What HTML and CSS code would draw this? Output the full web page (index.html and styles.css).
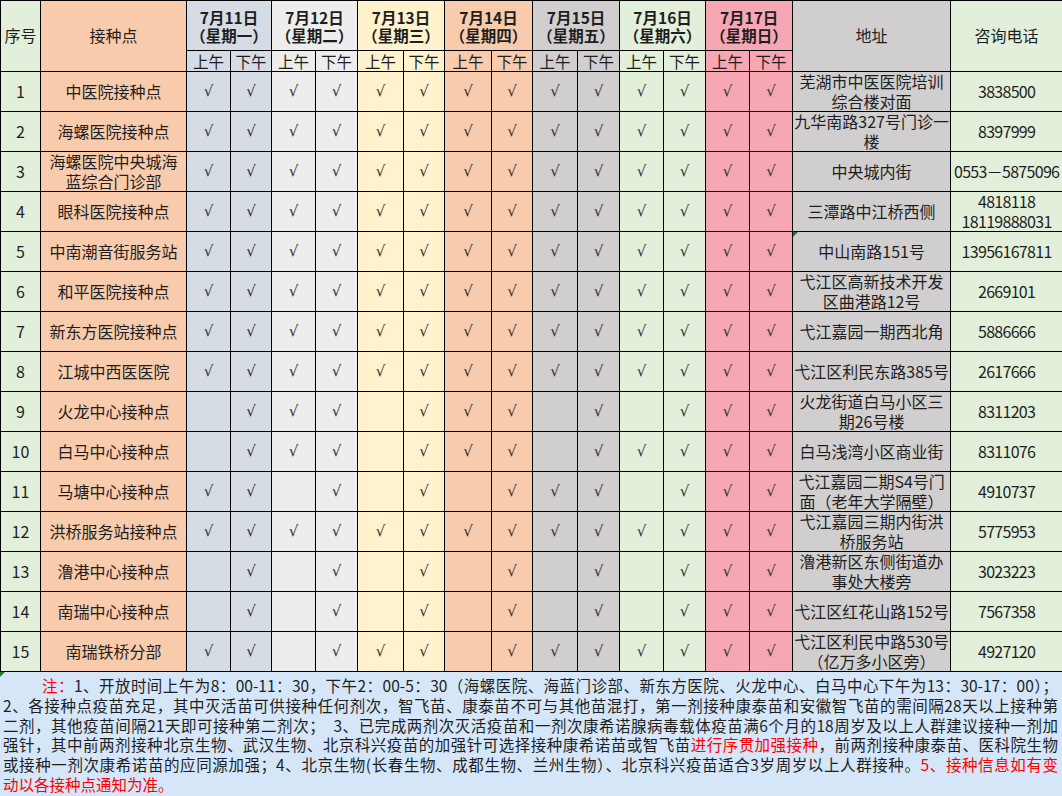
FILE: index.html
```html
<!DOCTYPE html>
<html lang="zh-CN">
<head>
<meta charset="utf-8">
<title>接种点安排</title>
<link rel="stylesheet" href="styles.css">
</head>
<body>
<table class="sheet">
  <colgroup>
    <col class="k-no"><col class="k-site">
    <col class="k11 w44"><col class="k11 w41">
    <col class="k12 w44"><col class="k12 w42">
    <col class="k13 w46"><col class="k13 w41">
    <col class="k14 w47"><col class="k14 w41">
    <col class="k15 w45"><col class="k15 w42">
    <col class="k16 w44"><col class="k16 w42">
    <col class="k17 w44"><col class="k17 w43">
    <col class="k-addr"><col class="k-tel">
  </colgroup>
  <thead>
    <tr class="h1">
      <th rowspan="2">序号</th>
      <th rowspan="2">接种点</th>
      <th colspan="2" class="date">7月11日<br>（星期一）</th>
      <th colspan="2" class="date">7月12日<br>（星期二）</th>
      <th colspan="2" class="date">7月13日<br>（星期三）</th>
      <th colspan="2" class="date">7月14日<br>（星期四）</th>
      <th colspan="2" class="date">7月15日<br>（星期五）</th>
      <th colspan="2" class="date">7月16日<br>（星期六）</th>
      <th colspan="2" class="date">7月17日<br>（星期日）</th>
      <th rowspan="2">地址</th>
      <th rowspan="2">咨询电话</th>
    </tr>
    <tr class="h2">
      <th>上午</th><th>下午</th><th>上午</th><th>下午</th><th>上午</th><th>下午</th><th>上午</th><th>下午</th><th>上午</th><th>下午</th><th>上午</th><th>下午</th><th>上午</th><th>下午</th>
    </tr>
  </thead>
  <tbody>
    <tr><td>1</td><td>中医院接种点</td><td class="ck">√</td><td class="ck">√</td><td class="ck">√</td><td class="ck">√</td><td class="ck">√</td><td class="ck">√</td><td class="ck">√</td><td class="ck">√</td><td class="ck">√</td><td class="ck">√</td><td class="ck">√</td><td class="ck">√</td><td class="ck">√</td><td class="ck">√</td><td>芜湖市中医医院培训<br>综合楼对面</td><td class="tel">3838500</td></tr>
    <tr><td>2</td><td>海螺医院接种点</td><td class="ck">√</td><td class="ck">√</td><td class="ck">√</td><td class="ck">√</td><td class="ck">√</td><td class="ck">√</td><td class="ck">√</td><td class="ck">√</td><td class="ck">√</td><td class="ck">√</td><td class="ck">√</td><td class="ck">√</td><td class="ck">√</td><td class="ck">√</td><td>九华南路327号门诊一<br>楼</td><td class="tel">8397999</td></tr>
    <tr><td>3</td><td>海螺医院中央城海<br>蓝综合门诊部</td><td class="ck">√</td><td class="ck">√</td><td class="ck">√</td><td class="ck">√</td><td class="ck">√</td><td class="ck">√</td><td class="ck">√</td><td class="ck">√</td><td class="ck">√</td><td class="ck">√</td><td class="ck">√</td><td class="ck">√</td><td class="ck">√</td><td class="ck">√</td><td>中央城内街</td><td class="tel">0553－5875096</td></tr>
    <tr><td>4</td><td>眼科医院接种点</td><td class="ck">√</td><td class="ck">√</td><td class="ck">√</td><td class="ck">√</td><td class="ck">√</td><td class="ck">√</td><td class="ck">√</td><td class="ck">√</td><td class="ck">√</td><td class="ck">√</td><td class="ck">√</td><td class="ck">√</td><td class="ck">√</td><td class="ck">√</td><td>三潭路中江桥西侧</td><td class="tel">4818118<br>18119888031</td></tr>
    <tr><td>5</td><td>中南潮音街服务站</td><td class="ck">√</td><td class="ck">√</td><td class="ck">√</td><td class="ck">√</td><td class="ck">√</td><td class="ck">√</td><td class="ck">√</td><td class="ck">√</td><td class="ck">√</td><td class="ck">√</td><td class="ck">√</td><td class="ck">√</td><td class="ck">√</td><td class="ck">√</td><td class="flagged"><span class="flag"></span>中山南路151号</td><td class="tel">13956167811</td></tr>
    <tr><td>6</td><td>和平医院接种点</td><td class="ck">√</td><td class="ck">√</td><td class="ck">√</td><td class="ck">√</td><td class="ck">√</td><td class="ck">√</td><td class="ck">√</td><td class="ck">√</td><td class="ck">√</td><td class="ck">√</td><td class="ck">√</td><td class="ck">√</td><td class="ck">√</td><td class="ck">√</td><td>弋江区高新技术开发<br>区曲港路12号</td><td class="tel">2669101</td></tr>
    <tr><td>7</td><td>新东方医院接种点</td><td class="ck">√</td><td class="ck">√</td><td class="ck">√</td><td class="ck">√</td><td class="ck">√</td><td class="ck">√</td><td class="ck">√</td><td class="ck">√</td><td class="ck">√</td><td class="ck">√</td><td class="ck">√</td><td class="ck">√</td><td class="ck">√</td><td class="ck">√</td><td>弋江嘉园一期西北角</td><td class="tel">5886666</td></tr>
    <tr><td>8</td><td>江城中西医医院</td><td class="ck">√</td><td class="ck">√</td><td class="ck">√</td><td class="ck">√</td><td class="ck">√</td><td class="ck">√</td><td class="ck">√</td><td class="ck">√</td><td class="ck">√</td><td class="ck">√</td><td class="ck">√</td><td class="ck">√</td><td class="ck">√</td><td class="ck">√</td><td>弋江区利民东路385号</td><td class="tel">2617666</td></tr>
    <tr><td>9</td><td>火龙中心接种点</td><td class="ck"></td><td class="ck">√</td><td class="ck">√</td><td class="ck">√</td><td class="ck"></td><td class="ck">√</td><td class="ck">√</td><td class="ck">√</td><td class="ck"></td><td class="ck">√</td><td class="ck"></td><td class="ck">√</td><td class="ck">√</td><td class="ck">√</td><td>火龙街道白马小区三<br>期26号楼</td><td class="tel">8311203</td></tr>
    <tr><td>10</td><td>白马中心接种点</td><td class="ck"></td><td class="ck">√</td><td class="ck">√</td><td class="ck">√</td><td class="ck"></td><td class="ck">√</td><td class="ck">√</td><td class="ck">√</td><td class="ck"></td><td class="ck">√</td><td class="ck">√</td><td class="ck">√</td><td class="ck">√</td><td class="ck">√</td><td>白马浅湾小区商业街</td><td class="tel">8311076</td></tr>
    <tr><td>11</td><td>马塘中心接种点</td><td class="ck">√</td><td class="ck">√</td><td class="ck"></td><td class="ck">√</td><td class="ck"></td><td class="ck">√</td><td class="ck"></td><td class="ck">√</td><td class="ck">√</td><td class="ck">√</td><td class="ck"></td><td class="ck">√</td><td class="ck">√</td><td class="ck">√</td><td>弋江嘉园二期S4号门<br>面（老年大学隔壁）</td><td class="tel">4910737</td></tr>
    <tr><td>12</td><td>洪桥服务站接种点</td><td class="ck">√</td><td class="ck">√</td><td class="ck">√</td><td class="ck">√</td><td class="ck">√</td><td class="ck">√</td><td class="ck">√</td><td class="ck">√</td><td class="ck">√</td><td class="ck">√</td><td class="ck">√</td><td class="ck">√</td><td class="ck">√</td><td class="ck">√</td><td>弋江嘉园三期内街洪<br>桥服务站</td><td class="tel">5775953</td></tr>
    <tr><td>13</td><td>澛港中心接种点</td><td class="ck"></td><td class="ck">√</td><td class="ck"></td><td class="ck">√</td><td class="ck"></td><td class="ck">√</td><td class="ck"></td><td class="ck">√</td><td class="ck"></td><td class="ck">√</td><td class="ck"></td><td class="ck">√</td><td class="ck">√</td><td class="ck">√</td><td>澛港新区东侧街道办<br>事处大楼旁</td><td class="tel">3023223</td></tr>
    <tr><td>14</td><td>南瑞中心接种点</td><td class="ck"></td><td class="ck">√</td><td class="ck"></td><td class="ck">√</td><td class="ck"></td><td class="ck">√</td><td class="ck"></td><td class="ck">√</td><td class="ck"></td><td class="ck">√</td><td class="ck"></td><td class="ck">√</td><td class="ck">√</td><td class="ck">√</td><td>弋江区红花山路152号</td><td class="tel">7567358</td></tr>
    <tr><td>15</td><td>南瑞铁桥分部</td><td class="ck">√</td><td class="ck">√</td><td class="ck"></td><td class="ck">√</td><td class="ck">√</td><td class="ck">√</td><td class="ck"></td><td class="ck">√</td><td class="ck">√</td><td class="ck">√</td><td class="ck">√</td><td class="ck">√</td><td class="ck">√</td><td class="ck">√</td><td>弋江区利民中路530号<br>（亿万多小区旁）</td><td class="tel">4927120</td></tr>
  </tbody>
</table>
<div class="note">
  <span class="flag"></span>
  <p class="ln first"><span class="red">注：</span>1、开放时间上午为8：00-11：30，下午2：00-5：30（海螺医院、海蓝门诊部、新东方医院、火龙中心、白马中心下午为13：30-17：00）；</p>
  <p class="ln">2、各接种点疫苗充足，其中灭活苗可供接种任何剂次，智飞苗、康泰苗不可与其他苗混打，第一剂接种康泰苗和安徽智飞苗的需间隔28天以上接种第</p>
  <p class="ln">二剂，其他疫苗间隔21天即可接种第二剂次；　3、已完成两剂次灭活疫苗和一剂次康希诺腺病毒载体疫苗满6个月的18周岁及以上人群建议接种一剂加</p>
  <p class="ln">强针，其中前两剂接种北京生物、武汉生物、北京科兴疫苗的加强针可选择接种康希诺苗或智飞苗<span class="red">进行序贯加强接种</span>，前两剂接种康泰苗、医科院生物</p>
  <p class="ln">或接种一剂次康希诺苗的应同源加强；4、北京生物(长春生物、成都生物、兰州生物）、北京科兴疫苗适合3岁周岁以上人群接种。<span class="red">5、接种信息如有变</span></p>
  <p class="ln last"><span class="red">动以各接种点通知为准。</span></p>
</div>
</body>
</html>
```

FILE: styles.css
```css
html, body {
  margin: 0;
  padding: 0;
  overflow: hidden;
}

body {
  width: 1062px;
  height: 796px;
  font-family: "Noto Sans CJK SC", "Noto Sans", sans-serif;
  color: #1e1e1e;
  background: #d4e6f7;
}

.sheet {
  border-collapse: collapse;
  table-layout: fixed;
  width: 1062px;
}

.sheet th,
.sheet td {
  border: 1px solid #000;
  padding: 0;
  text-align: center;
  vertical-align: middle;
  font-size: 16px;
  line-height: 19.5px;
  font-weight: normal;
  white-space: nowrap;
  overflow: visible;
}

.k-no   { width: 40px;  background: #e2efda; }
.k-site { width: 146px; background: #f8cbad; }
.k11 { background: #d6dce4; }
.k12 { background: #ededed; }
.k13 { background: #fff2cc; }
.k14 { background: #f8cbad; }
.k15 { background: #d0cece; }
.k16 { background: #e2efda; }
.k17 { background: #f7a6b4; }
.k-addr { width: 158px; background: #d0cece; }
.k-tel  { width: 112px; background: #e2efda; }

.w41 { width: 41px; }
.w42 { width: 42px; }
.w43 { width: 43px; }
.w44 { width: 44px; }
.w45 { width: 45px; }
.w46 { width: 46px; }
.w47 { width: 47px; }

.h1 { height: 50px; }
.h2 { height: 21px; }
.sheet tbody tr { height: 40px; }

.sheet th.date {
  font-weight: bold;
  font-size: 15.5px;
  line-height: 18px;
}

.sheet .h2 th {
  font-size: 15.5px;
  line-height: 19px;
}

.sheet td.ck {
  color: #333;
  font-size: 15px;
  font-family: "DejaVu Sans", sans-serif;
}

.sheet td.tel {
  letter-spacing: -0.7px;
}

.flagged {
  position: relative;
}

.flag {
  position: absolute;
  left: 0;
  top: 0;
  width: 0;
  height: 0;
  border-top: 5px solid #1e7b34;
  border-right: 5px solid transparent;
}

.note {
  position: relative;
  box-sizing: border-box;
  height: 125px;
  overflow: hidden;
  padding: 4px 4px 0 3px;
  background: #d4e6f7;
  font-size: 15.5px;
  line-height: 19.8px;
  color: #1e1e1e;
}

.note .ln {
  margin: 0;
  text-align: justify;
  text-align-last: justify;
}

.note .ln.first {
  text-indent: 39px;
}

.note .ln.last {
  text-align: left;
  text-align-last: left;
}

.red {
  color: #f00;
}
```
